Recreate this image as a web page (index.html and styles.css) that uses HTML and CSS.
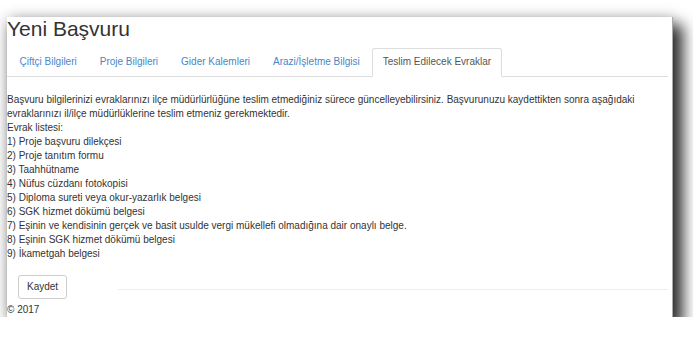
FILE: index.html
```html
<!DOCTYPE html>
<html lang="tr">
<head>
    <meta charset="UTF-8">
    <meta name="viewport" content="width=device-width, initial-scale=1.0">
    <title>Yeni Başvuru</title>
    <link rel="stylesheet" href="styles.css">
</head>
<body>
    <div class="sheet">
        <h2 class="title">Yeni Başvuru</h2>

        <ul class="tabs">
            <li><a href="#">Çiftçi Bilgileri</a></li>
            <li><a href="#">Proje Bilgileri</a></li>
            <li><a href="#">Gider Kalemleri</a></li>
            <li><a href="#">Arazi/İşletme Bilgisi</a></li>
            <li class="active"><a href="#">Teslim Edilecek Evraklar</a></li>
        </ul>

        <div class="tab-body">
            <p>Başvuru bilgilerinizi evraklarınızı ilçe müdürlürlüğüne teslim etmediğiniz sürece güncelleyebilirsiniz. Başvurunuzu kaydettikten sonra aşağıdaki evraklarınızı il/ilçe müdürlüklerine teslim etmeniz gerekmektedir.</p>
            <div>Evrak listesi:</div>
            <div>1) Proje başvuru dilekçesi</div>
            <div>2) Proje tanıtım formu</div>
            <div>3) Taahhütname</div>
            <div>4) Nüfus cüzdanı fotokopisi</div>
            <div>5) Diploma sureti veya okur-yazarlık belgesi</div>
            <div>6) SGK hizmet dökümü belgesi</div>
            <div>7) Eşinin ve kendisinin gerçek ve basit usulde vergi mükellefi olmadığına dair onaylı belge.</div>
            <div>8) Eşinin SGK hizmet dökümü belgesi</div>
            <div>9) İkametgah belgesi</div>
        </div>

        <div class="actions">
            <button type="button">Kaydet</button>
            <span class="rule"></span>
        </div>

        <footer class="foot">© 2017</footer>
    </div>
</body>
</html>
```

FILE: styles.css
```css
body {
    margin: 0;
    padding: 17px 0 0 7px;
    background-color: #fff;
    font-family: "Liberation Sans", Arial, sans-serif;
    font-size: 10px;
    line-height: 14px;
    color: #333;
}
.sheet {
    width: 665px;
    background-color: #fff;
    border-right: 1px solid #aaa;
    box-shadow: 8px 10px 14px 2px rgba(0, 0, 0, 0.8), 0 0 14px rgba(0, 0, 0, 0.2); /* photo-style drop shadow */
}
.title {
    margin: 0;
    font-size: 21px;
    line-height: 23px;
    font-weight: normal;
}
.tabs {
    list-style: none;
    margin: 8px 4px 0 0;
    padding: 0 0 0 2px;
    display: flex;
    border-bottom: 1px solid #ddd;
}
.tabs li {
    margin: 0 2px -1px 0;
}
.tabs a {
    display: block;
    padding: 6px 9.5px 7px;
    border: 1px solid transparent;
    border-radius: 3px 3px 0 0;
    color: #4a86c8;
    text-decoration: none;
}
.tabs .active a {
    color: #555;
    background-color: #fff;
    border-color: #ddd #ddd transparent;
}
.tab-body {
    padding-top: 16px;
}
.tab-body p {
    margin: 0;
}
.actions {
    display: flex;
    align-items: center;
    margin-top: 14px;
    padding-left: 11px;
}
.actions button {
    font: inherit;
    color: #333;
    background-color: #fff;
    border: 1px solid #ccc;
    border-radius: 3px;
    padding: 4px 8px;
}
.rule {
    flex: 1;
    margin: 4px 4px 0 51px;
    border-top: 1px solid #eee;
}
.foot {
    margin-top: 4px;
}
```
